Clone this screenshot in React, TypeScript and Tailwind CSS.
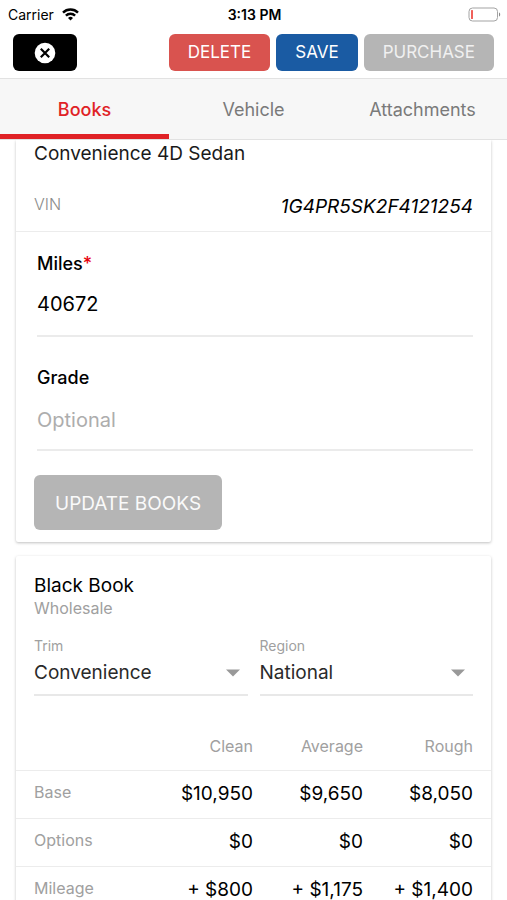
import { useState } from "react";

const tabs = ["Books", "Vehicle", "Attachments"];

const bookRows = [
  { label: "Base", values: ["$10,950", "$9,650", "$8,050"] },
  { label: "Options", values: ["$0", "$0", "$0"] },
  { label: "Mileage", values: ["+ $800", "+ $1,175", "+ $1,400"] },
];

function StatusBar() {
  return (
    <div className="grid h-7 grid-cols-3 items-center pl-2 pr-1.5 text-[14px] text-black">
      <div className="flex items-center gap-2">
        <span>Carrier</span>
        <svg width="17" height="13" viewBox="0 0 17 13" fill="none" stroke="black" strokeWidth="2.4">
          <path d="M1 4.6a10.6 10.6 0 0 1 15 0" />
          <path d="M3.9 7.7a6.5 6.5 0 0 1 9.2 0" />
          <path d="M8.5 12.4 6 9.9a3.6 3.6 0 0 1 5 0Z" fill="black" stroke="none" />
        </svg>
      </div>
      <span className="text-center font-semibold">3:13 PM</span>
      <svg className="ml-auto" width="33" height="15" viewBox="0 0 33 15" fill="none">
        <rect x="1" y="1" width="28.5" height="13" rx="3.5" stroke="#a3a3a3" />
        <rect x="3" y="3" width="2" height="9" rx="0.5" fill="#f0605a" />
        <path d="M31 5.5v4c1.6-.4 1.6-3.6 0-4Z" fill="#8a8a8a" />
      </svg>
    </div>
  );
}

function Toolbar() {
  return (
    <div className="flex items-center gap-1.5 px-[13px] pb-[7px] pt-1.5">
      <button type="button" aria-label="Close" className="mr-auto flex h-[37px] w-16 items-center justify-center rounded-md bg-black">
        <svg width="22" height="22" viewBox="0 0 22 22">
          <circle cx="11" cy="11" r="10.3" fill="white" />
          <path d="m6.8 6.8 8.4 8.4m0-8.4-8.4 8.4" stroke="black" strokeWidth="2.2" />
        </svg>
      </button>
      <button type="button" className="h-[37px] rounded-md bg-[#d9534f] px-[19px] text-[17px] text-white">DELETE</button>
      <button type="button" className="h-[37px] rounded-md bg-[#1a5ba3] px-[19px] text-[17px] text-white">SAVE</button>
      <button type="button" className="h-[37px] rounded-md bg-[#b5b5b5] px-[19px] text-[17px] text-[#f0f0f0]">PURCHASE</button>
    </div>
  );
}

function Dropdown({ id, label, options }: { id: string; label: string; options: string[] }) {
  return (
    <div className="flex flex-1 flex-col">
      <label htmlFor={id} className="text-[14px] leading-5 text-[#a0a0a0]">{label}</label>
      <div className="relative border-b-2 border-[#e8e8e8]">
        <select id={id} className="h-[38px] w-full appearance-none bg-transparent pb-1 text-[19px] text-[#2a2a2a] outline-none">
          {options.map((option) => (
            <option key={option}>{option}</option>
          ))}
        </select>
        <svg className="pointer-events-none absolute right-2 top-[13px]" width="14" height="8" viewBox="0 0 14 8">
          <path d="M0 .5h14L7 7.5Z" fill="#999" />
        </svg>
      </div>
    </div>
  );
}

function App() {
  const [activeTab, setActiveTab] = useState("Books");
  const [miles, setMiles] = useState("40672");
  const [grade, setGrade] = useState("");

  return (
    <div className="flex h-screen flex-col overflow-hidden bg-white font-['Inter','Liberation_Sans',sans-serif] text-[#1a1a1a]">
      <header className="shrink-0">
        <StatusBar />
        <Toolbar />
        <nav className="flex border-y border-[#e2e2e2] bg-[#f7f7f7]">
          {tabs.map((tab) => (
            <button
              key={tab}
              type="button"
              onClick={() => setActiveTab(tab)}
              className={
                tab === activeTab
                  ? "h-[60px] flex-1 basis-0 border-b-[5px] border-[#e02226] pt-1.5 text-[18px] font-medium text-[#e02226]"
                  : "h-[60px] flex-1 basis-0 border-b-[5px] border-transparent pt-1.5 text-[18px] text-[#7a7a7a]"
              }
            >
              {tab}
            </button>
          ))}
        </nav>
      </header>

      <main className="flex min-h-0 flex-1 flex-col gap-3.5 overflow-hidden px-4">
        <section className="shrink-0 rounded-b-xs bg-white pb-3 shadow-[0_1px_3px_rgba(0,0,0,0.25)]">
          <h1 className="px-[18px] text-[19px] leading-7">Convenience 4D Sedan</h1>
          <div className="flex h-16 items-center justify-between border-b border-[#ececec] px-[18px] pt-4">
            <span className="pb-2 text-[16px] font-light text-[#8c8c8c]">VIN</span>
            <span className="text-[19px] italic text-black">1G4PR5SK2F4121254</span>
          </div>
          <div className="flex flex-col px-[18px] pt-5">
            <label htmlFor="miles" className="pl-[3px] text-[18px] font-medium leading-6 text-black">
              Miles<span className="text-red-600">*</span>
            </label>
            <input
              id="miles"
              value={miles}
              onChange={(e) => setMiles(e.target.value)}
              className="ml-[3px] h-[61px] border-b-2 border-[#ebebeb] pb-1 text-[20px] text-black outline-none"
            />
            <label htmlFor="grade" className="mt-[29px] pl-[3px] text-[18px] font-medium leading-6 text-black">
              Grade
            </label>
            <input
              id="grade"
              value={grade}
              placeholder="Optional"
              onChange={(e) => setGrade(e.target.value)}
              className="ml-[3px] h-[61px] border-b-2 border-[#ebebeb] text-[20px] text-black outline-none placeholder:text-[#adadad]"
            />
            <button type="button" className="mt-6 h-[55px] self-start rounded-md bg-[#b5b5b5] px-[21px] pt-1 text-[19px] text-[#fafafa]">
              UPDATE BOOKS
            </button>
          </div>
        </section>

        <section className="shrink-0 rounded-xs bg-white pb-3 pt-[18px] shadow-[0_1px_3px_rgba(0,0,0,0.25)]">
          <div className="px-[18px]">
            <h2 className="text-[19px] leading-6 text-black">Black Book</h2>
            <p className="text-[16px] leading-5 text-[#a0a0a0]">Wholesale</p>
            <div className="mt-[18px] flex gap-3">
              <Dropdown id="trim" label="Trim" options={["Convenience"]} />
              <Dropdown id="region" label="Region" options={["National"]} />
            </div>
          </div>
          <table className="mt-[26px] w-full table-fixed text-right">
            <colgroup>
              <col />
              <col className="w-[110px]" />
              <col className="w-[110px]" />
              <col className="w-32" />
            </colgroup>
            <thead>
              <tr className="h-12 border-b border-[#ececec] text-[16px] text-[#a0a0a0]">
                <th></th>
                <th className="text-right font-normal">Clean</th>
                <th className="text-right font-normal">Average</th>
                <th className="pr-[18px] text-right font-normal">Rough</th>
              </tr>
            </thead>
            <tbody>
              {bookRows.map((row) => (
                <tr key={row.label} className="h-12 border-b border-[#ececec]">
                  <th className="pb-1 pl-[18px] text-left text-[16px] font-normal text-[#a0a0a0]">{row.label}</th>
                  {row.values.map((value, i) => (
                    <td key={i} className="text-[19px] text-black last:pr-[18px]">{value}</td>
                  ))}
                </tr>
              ))}
            </tbody>
          </table>
        </section>
      </main>
    </div>
  );
}

export default App;
